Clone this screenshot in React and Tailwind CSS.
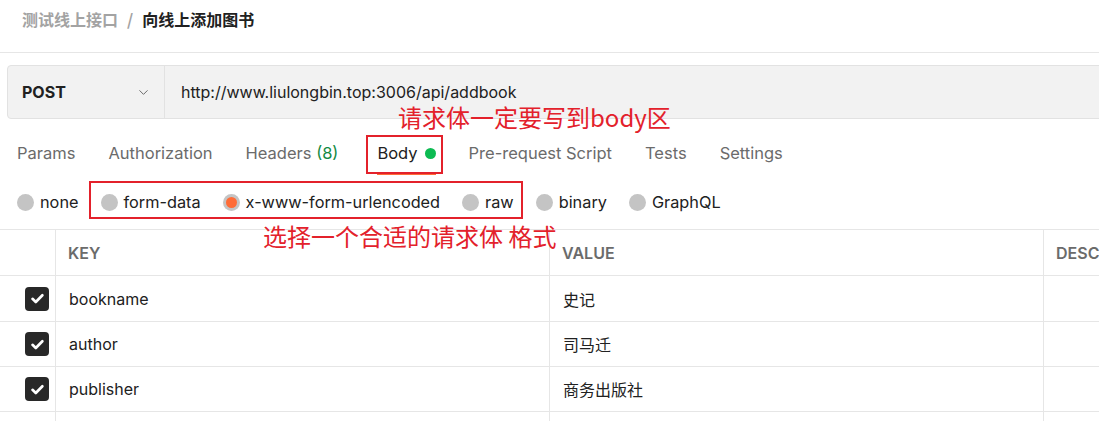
import { ChevronDown } from "lucide-react";

const tabs = ["Params", "Authorization", "Headers", "Body", "Pre-request Script", "Tests", "Settings"];
const modes = ["none", "form-data", "x-www-form-urlencoded", "raw", "binary", "GraphQL"];
const rows = [
    { key: "bookname", value: "史记" },
    { key: "author", value: "司马迁" },
    { key: "publisher", value: "商务出版社" },
];

function Radio({ label, checked }) {
    return (
        <div className="flex items-center gap-[6px]">
            <span className="w-[17px] h-[17px] rounded-full bg-[#c4c4c4] flex items-center justify-center">
                {checked && <span className="w-[11px] h-[11px] rounded-full bg-[#ff6c37]" />}
            </span>
            <span className="text-[16.3px] leading-[24px] text-[#212121]">{label}</span>
        </div>
    );
}

function CheckBox() {
    return (
        <span className="w-[24px] h-[24px] rounded-[4px] bg-[#282828] flex items-center justify-center">
            <svg className="w-[17px] h-[17px]" viewBox="0 0 16 16" fill="none">
                <path d="M3.3 8.3l3.1 3 6.2-6.4" stroke="white" strokeWidth="2.5" strokeLinecap="round" strokeLinejoin="round" />
            </svg>
        </span>
    );
}

export default function App() {
    return (
        <div className="relative w-[1099px] h-[421px] overflow-hidden bg-white font-['Inter','Noto_Sans_CJK_SC',sans-serif] text-[#212121]">
            {/* Breadcrumb */}
            <div className="h-[53px] border-b border-[#e6e6e6] pl-[22px] pt-[7px] flex items-start gap-[9px] text-[16px] font-bold leading-[24px] font-['Noto_Sans_CJK_SC',sans-serif]">
                <span className="text-[#a3a3a3]">测试线上接口</span>
                <span className="text-[#a3a3a3]">/</span>
                <span className="text-[#212121]">向线上添加图书</span>
            </div>

            {/* URL bar */}
            <div className="mt-[12px] ml-[7px] mr-[-10px] h-[54px] flex bg-[#f2f2f2] border border-[#e2e2e2] rounded-[4px]">
                <div className="w-[157px] flex items-center justify-between pl-[14px] pr-[13px] border-r border-[#e2e2e2]">
                    <span className="text-[16px] font-bold">POST</span>
                    <ChevronDown className="w-[15px] h-[15px] text-[#6b6b6b]" strokeWidth={1.6} />
                </div>
                <div className="flex items-center pl-[16px] text-[16px]">http://www.liulongbin.top:3006/api/addbook</div>
            </div>

            {/* Tabs */}
            <div className="mt-[22px] pl-[17px] flex gap-[33px] text-[16.5px] leading-[24px] text-[#6b6b6b]">
                {tabs.map((t) =>
                    t === "Body" ? (
                        <div key={t} className="relative ml-[6px] flex items-center gap-[7px] pb-[7px] border-b-[3px] border-[#ff6c37] text-[#212121]">
                            <span>Body</span>
                            <span className="w-[11px] h-[11px] rounded-full bg-[#0cbb52]" />
                            <span className="absolute left-[-11px] right-[-7px] top-[-6px] bottom-[-2px] border-2 border-[#e3212b]" />
                        </div>
                    ) : t === "Headers" ? (
                        <div key={t} className="pb-[7px]">
                            Headers <span className="text-[#138a43]">(8)</span>
                        </div>
                    ) : (
                        <div key={t} className="pb-[7px]">{t}</div>
                    )
                )}
            </div>

            {/* Body modes */}
            <div className="mt-[15px] pl-[17px] flex items-center gap-[22px] h-[24px]">
                <Radio label={modes[0]} />
                <div className="relative flex items-center gap-[22px]">
                    <Radio label={modes[1]} />
                    <Radio label={modes[2]} checked />
                    <Radio label={modes[3]} />
                    <span className="absolute left-[-12px] right-[-9px] top-[-9px] bottom-[-5px] border-2 border-[#e3212b]" />
                </div>
                <Radio label={modes[4]} />
                <Radio label={modes[5]} />
            </div>

            {/* Table */}
            <div className="mt-[15px] border-t border-[#e6e6e6] text-[16px]">
                <div className="grid grid-cols-[56px_494px_494px_1fr] h-[46px] border-b border-[#e6e6e6]">
                    <div className="border-r border-[#e6e6e6]" />
                    <div className="border-r border-[#e6e6e6] flex items-center pl-[12px] font-semibold text-[#6b6b6b]">KEY</div>
                    <div className="border-r border-[#e6e6e6] flex items-center pl-[12px] font-semibold text-[#6b6b6b]">VALUE</div>
                    <div className="flex items-center pl-[12px] font-semibold text-[#6b6b6b] whitespace-nowrap">DESCRIPTION</div>
                </div>
                {rows.map((r, i) => (
                    <div key={r.key} className={`grid grid-cols-[56px_494px_494px_1fr] border-b border-[#e6e6e6] ${i === 0 ? "h-[46px]" : "h-[45px]"}`}>
                        <div className="border-r border-[#e6e6e6] flex items-center pl-[25px]">
                            <CheckBox />
                        </div>
                        <div className="border-r border-[#e6e6e6] flex items-center pl-[13px]">{r.key}</div>
                        <div className="border-r border-[#e6e6e6] flex items-center pl-[13px] font-['Noto_Sans_CJK_SC',sans-serif]">{r.value}</div>
                        <div />
                    </div>
                ))}
                <div className="grid grid-cols-[56px_494px_494px_1fr] h-[45px]">
                    <div className="border-r border-[#e6e6e6]" />
                    <div className="border-r border-[#e6e6e6]" />
                    <div className="border-r border-[#e6e6e6]" />
                    <div />
                </div>
            </div>

            {/* Annotations */}
            <div className="absolute left-[398px] top-[103px] text-[24px] leading-[28px] text-[#e3212b] font-['Noto_Sans_CJK_SC',sans-serif]">
                请求体一定要写到body区
            </div>
            <div className="absolute left-[263px] top-[222px] text-[24px] leading-[28px] text-[#e3212b] font-['Noto_Sans_CJK_SC',sans-serif]">
                选择一个合适的请求体 格式
            </div>
        </div>
    );
}
